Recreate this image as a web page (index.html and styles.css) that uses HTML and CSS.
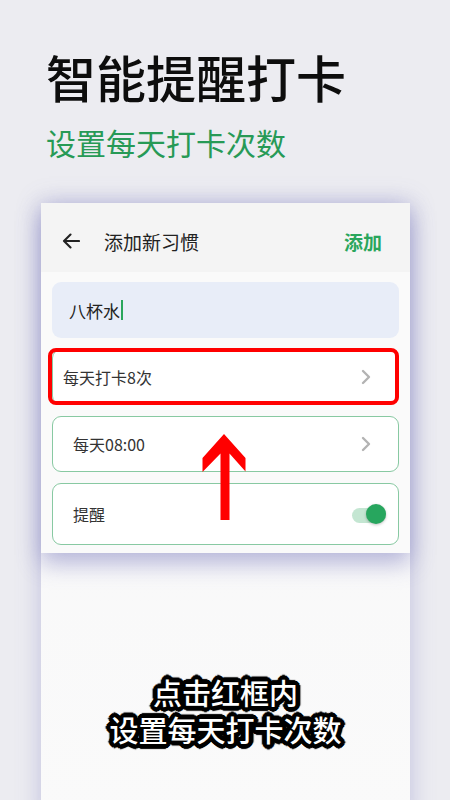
FILE: index.html
```html
<!DOCTYPE html>
<html lang="zh-CN">
<head>
<meta charset="utf-8">
<title>智能提醒打卡</title>
<link rel="stylesheet" href="styles.css">
</head>
<body>
<div class="page">
  <header class="hero">
    <h1 class="title">智能提醒打卡</h1>
    <p class="subtitle">设置每天打卡次数</p>
  </header>

  <section class="phone">
    <div class="card">
      <div class="topbar">
        <svg class="back" width="18" height="16" viewBox="0 0 18 16" aria-hidden="true">
          <path d="M17 8H2.5M8.5 1.5L2 8l6.5 6.5" fill="none" stroke="#222" stroke-width="2.1" stroke-linecap="round" stroke-linejoin="round"/>
        </svg>
        <span class="topbar-title">添加新习惯</span>
        <span class="topbar-action">添加</span>
      </div>
      <div class="form">
        <div class="input"><span class="input-text">八杯水</span><span class="caret"></span></div>
        <div class="row row-first">
          <span class="row-label">每天打卡8次</span>
          <svg class="chev" width="12" height="16" viewBox="0 0 12 16" aria-hidden="true"><path d="M3 2l6 6-6 6" fill="none" stroke="#b3b3b3" stroke-width="2.4" stroke-linecap="round" stroke-linejoin="round"/></svg>
          <span class="highlight"></span>
        </div>
        <div class="row">
          <span class="row-label">每天08:00</span>
          <svg class="chev" width="12" height="16" viewBox="0 0 12 16" aria-hidden="true"><path d="M3 2l6 6-6 6" fill="none" stroke="#b3b3b3" stroke-width="2.4" stroke-linecap="round" stroke-linejoin="round"/></svg>
        </div>
        <div class="row row-toggle">
          <span class="row-label">提醒</span>
          <span class="switch"><span class="switch-thumb"></span></span>
        </div>
      </div>
    </div>

    <svg class="pointer" width="44" height="86" viewBox="0 0 44 86" aria-hidden="true">
      <polygon points="22,0 43.5,24 43.5,37.5 27.5,19.5 27.5,86 18.5,86 18.5,19.5 0.5,38 0.5,24" fill="#ff0000"/>
    </svg>

    <div class="caption">
      <div class="caption-line">点击红框内</div>
      <div class="caption-line">设置每天打卡次数</div>
    </div>
  </section>
</div>
</body>
</html>
```

FILE: styles.css
```css
html, body {
  margin: 0;
  padding: 0;
}
body {
  background: #ececf1;
  font-family: "Noto Sans CJK SC", "Noto Sans", "Liberation Sans", sans-serif;
  overflow: hidden;
  height: 800px;
}
.page {
  width: 450px;
  height: 800px;
  overflow: hidden;
}
.hero {
  padding: 51px 0 0 46px;
}
.title {
  margin: 0;
  font-size: 50px;
  line-height: 50px;
  font-weight: 500;
  color: #0d0d0d;
}
.subtitle {
  margin: 26px 0 0 0;
  font-size: 30px;
  line-height: 30px;
  font-weight: 400;
  color: #279a56;
}
.phone {
  position: relative;
  margin: 46px 0 0 41px;
  width: 369px;
  height: 620px;
  background: linear-gradient(#f1f1f4, #f8f8f9 30%, #fafafa);
  box-shadow: 0 0 22px rgba(110, 110, 185, 0.35);
}
.card {
  position: relative;
  background: #fafafa;
  box-shadow: 0 10px 22px rgba(95, 95, 175, 0.45);
}
.topbar {
  box-sizing: border-box;
  height: 69px;
  display: flex;
  align-items: center;
  padding: 7px 28px 0 21px;
  background: #f4f4f4;
}
.back {
  display: block;
  flex: none;
}
.topbar-title {
  margin-left: 24px;
  font-size: 19px;
  color: #222;
  flex: 1;
}
.topbar-action {
  font-size: 19px;
  font-weight: 700;
  color: #2aa65c;
}
.form {
  padding: 10px 11px 8px 11px;
  display: flex;
  flex-direction: column;
  gap: 11px;
}
.input {
  height: 56px;
  border-radius: 9px;
  background: #e8edf8;
  display: flex;
  align-items: center;
  padding-left: 17px;
}
.input-text {
  font-size: 17px;
  color: #222;
}
.caret {
  width: 2px;
  height: 20px;
  background: #2aa65c;
  margin-left: 1px;
}
.row {
  position: relative;
  box-sizing: border-box;
  height: 56px;
  border: 1px solid #88c9a2;
  border-radius: 9px;
  background: #fff;
  display: flex;
  align-items: center;
  justify-content: space-between;
  padding: 0 26px 0 20px;
}
.row-first {
  padding-left: 10px;
}
.row-toggle {
  height: 62px;
  padding-right: 12px;
}
.row-label {
  font-size: 16px;
  color: #333;
}
.chev {
  display: block;
}
.highlight {
  position: absolute;
  left: -5px;
  top: -2px;
  right: -1px;
  bottom: -1px;
  border: 4.5px solid #ff0000;
  border-radius: 8px;
}
.switch {
  position: relative;
  width: 34px;
  height: 15px;
  border-radius: 8px;
  background: rgba(42, 166, 92, 0.28);
  margin-top: 2px;
}
.switch-thumb {
  position: absolute;
  right: 0;
  top: 50%;
  width: 20px;
  height: 20px;
  margin-top: -11px;
  border-radius: 50%;
  background: #27a65e;
  box-shadow: 0 1px 3px rgba(0, 0, 0, 0.25);
}
.pointer {
  position: absolute;
  left: 161px;
  top: 231px;
  display: block;
}
.caption {
  margin-top: 123px;
  text-align: center;
  font-size: 29px;
  font-weight: 500;
  color: #fff;
  display: flex;
  flex-direction: column;
  align-items: center;
  gap: 4px;
}
.caption-line {
  line-height: 33px;
  height: 33px;
  text-shadow:
    4px 0 0 #000, -4px 0 0 #000, 0 4px 0 #000, 0 -4px 0 #000,
    3px 3px 0 #000, -3px 3px 0 #000, 3px -3px 0 #000, -3px -3px 0 #000,
    4px 2px 0 #000, -4px 2px 0 #000, 4px -2px 0 #000, -4px -2px 0 #000,
    2px 4px 0 #000, -2px 4px 0 #000, 2px -4px 0 #000, -2px -4px 0 #000,
    5px 0 1px #000, -5px 0 1px #000, 0 5px 1px #000, 0 -5px 1px #000;
}
```
